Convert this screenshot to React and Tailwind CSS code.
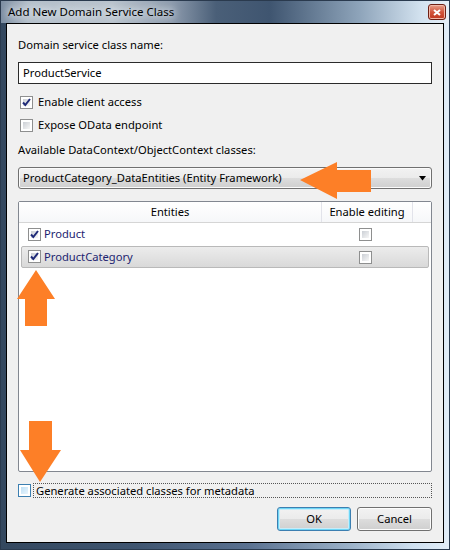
import React from 'react';

function Check({ checked, focus }) {
  return (
    <span
      className={`relative flex h-[13px] w-[13px] shrink-0 items-center justify-center border bg-white ${
        focus ? 'border-[#3c7fb1]' : 'border-[#8e8f8f]'
      }`}
    >
      <span
        className={`absolute inset-[2px] ${
          focus
            ? 'bg-[linear-gradient(135deg,#bfe0f5,#e9f5fd)]'
            : 'bg-[linear-gradient(135deg,#cbcfd5,#f7f7f7)]'
        }`}
      />
      {checked && (
        <svg className="relative" width="11" height="11" viewBox="0 0 11 11">
          <path d="M2 5.5 L4.3 8 L9 2" fill="none" stroke="#1f2a78" strokeWidth="2" />
        </svg>
      )}
    </span>
  );
}

export default function App() {
  return (
    <div className="w-[450px] h-[550px] flex flex-col overflow-hidden border border-[#2a3a4e] bg-[linear-gradient(to_right,#34485f_0%,#3f5570_30%,#5a7190_55%,#9cb2c9_78%,#cfe0f0_92%,#e2edf7_100%)] font-['Noto_Sans',sans-serif] text-[11.2px] text-black">
      <div className="h-[22px] flex items-center justify-between pl-[7px] pr-[3px] bg-[linear-gradient(to_right,#7d8ea2_0%,#b4bfca_6%,#b9c3cd_25%,#8e9cae_38%,#4a5f78_48%,#3f5570_60%,#8ea4ba_80%,#d4e3f0_94%,#e6eef6_100%)]">
        <span className="text-[11.5px] leading-none [text-shadow:0_0_6px_#e8eef4,0_0_10px_#e8eef4]">
          Add New Domain Service Class
        </span>
        <div className="flex h-[16px] w-[18px] items-center justify-center rounded-[3px] border border-[#6e1f14] bg-[linear-gradient(#e8a08c,#d2553c_50%,#c0371f_100%)] shadow-[inset_0_0_0_1px_#f2b8a8]">
          <svg width="8" height="7" viewBox="0 0 8 7">
            <path d="M1 1 L7 6 M7 1 L1 6" stroke="#fff" strokeWidth="2" />
          </svg>
        </div>
      </div>

      <div className="mx-[5px] flex flex-1 flex-col border border-black bg-[#f0f0f0] px-[11px]">
        <div className="mt-[13px] leading-[16px]">Domain service class name:</div>

        <div className="mt-[9px] flex h-[22px] items-center border border-[#2b2b2b] bg-white px-[4px]">
          ProductService
        </div>

        <div className="mt-[10px] flex h-[16px] items-center gap-[5px] pl-[2px]">
          <Check checked />
          <span>Enable client access</span>
        </div>
        <div className="mt-[7px] flex h-[16px] items-center gap-[5px] pl-[2px]">
          <Check />
          <span>Expose OData endpoint</span>
        </div>

        <div className="mt-[9px] leading-[16px]">Available DataContext/ObjectContext classes:</div>

        <div className="mt-[9px] flex h-[22px] items-center justify-between rounded-[3px] border border-[#707070] bg-[linear-gradient(#f2f2f2_0%,#ebebeb_50%,#dddddd_50%,#cfcfcf_100%)] pl-[4px] pr-[4px] shadow-[inset_0_0_0_1px_#fbfbfb]">
          <span>ProductCategory_DataEntities (Entity Framework)</span>
          <svg width="8" height="5" viewBox="0 0 8 5">
            <path d="M0 0 H7 L3.5 4.5 Z" fill="#000" />
          </svg>
        </div>

        <div className="mt-[12px] flex h-[271px] flex-col rounded-[2px] border border-[#828790] bg-white">
          <div className="flex h-[21px] border-b border-[#d5d5d5] bg-[linear-gradient(#ffffff,#f6f7f9)]">
            <div className="flex w-[303px] items-center justify-center border-r border-[#e2e3ea]">Entities</div>
            <div className="flex w-[91px] items-center justify-center border-r border-[#e2e3ea]">Enable editing</div>
            <div className="flex-1" />
          </div>
          <div className="mx-[2px] flex h-[23px] items-center border border-transparent text-[#1c2470]">
            <div className="flex w-[301px] items-center gap-[3px] pl-[6px]">
              <Check checked />
              <span>Product</span>
            </div>
            <div className="flex w-[91px] justify-center pr-[6px]">
              <Check />
            </div>
          </div>
          <div className="mx-[2px] flex h-[22px] items-center rounded-[2px] border border-[#b9b9b9] bg-[linear-gradient(#ececec,#d9d9d9)] text-[#1c2470]">
            <div className="flex w-[301px] items-center gap-[3px] pl-[6px]">
              <Check checked />
              <span>ProductCategory</span>
            </div>
            <div className="flex w-[91px] justify-center pr-[6px]">
              <Check />
            </div>
          </div>
        </div>

        <div className="mt-[11px] flex h-[15px] items-center gap-[2px]">
          <Check focus />
          <span className="flex h-[15px] flex-1 items-center border border-dotted border-[#555] pl-[2px] leading-none">
            Generate associated classes for metadata
          </span>
        </div>

        <div className="mt-[9px] flex justify-end gap-[6px]">
          <button className="h-[24px] w-[74px] rounded-[3px] border border-[#3c7fb1] bg-[linear-gradient(#f2f2f2_0%,#ebebeb_50%,#dddddd_50%,#cfcfcf_100%)] shadow-[inset_0_0_0_1px_#6ed6f6,inset_0_0_0_2px_#c7ecf9]">
            OK
          </button>
          <button className="h-[24px] w-[75px] rounded-[3px] border border-[#707070] bg-[linear-gradient(#f2f2f2_0%,#ebebeb_50%,#dddddd_50%,#cfcfcf_100%)] shadow-[inset_0_0_0_1px_#fcfcfc]">
            Cancel
          </button>
        </div>
      </div>
      <div className="h-[6px]" />

      <svg className="absolute left-0 top-0 pointer-events-none" width="450" height="550">
        <polygon points="300,180 337,162 337,170 371,170 371,192 337,192 337,199" fill="#fd7f27" />
        <polygon points="36,270 55,299 47,299 47,326 25,326 25,299 17,299" fill="#fd7f27" />
        <polygon points="29,421 52,421 52,450 61,450 40,482 20,450 29,450" fill="#fd7f27" />
      </svg>
    </div>
  );
}
